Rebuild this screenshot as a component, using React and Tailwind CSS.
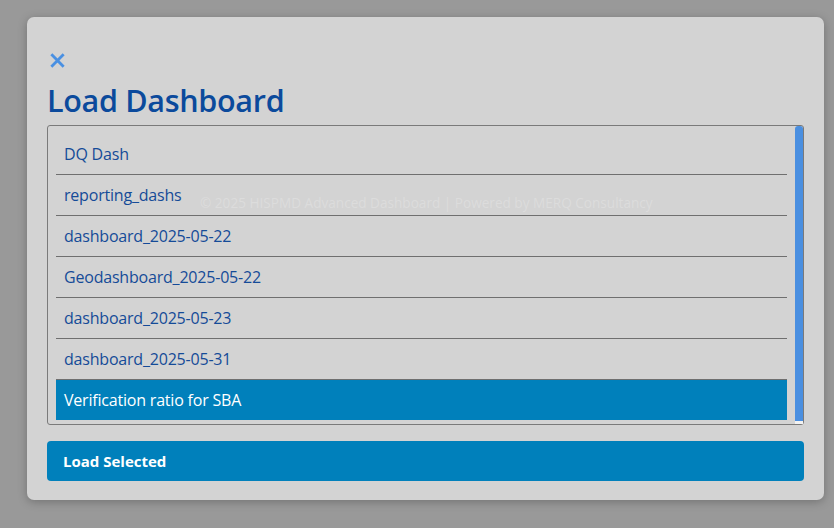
import React, { useState } from 'react';

const dashboards = [
  'DQ Dash',
  'reporting_dashs',
  'dashboard_2025-05-22',
  'Geodashboard_2025-05-22',
  'dashboard_2025-05-23',
  'dashboard_2025-05-31',
  'Verification ratio for SBA',
];

export default function App() {
  const [selected, setSelected] = useState('Verification ratio for SBA');

  return (
    <div className="h-[528px] w-[834px] overflow-hidden bg-[#999999] pt-[17px] pl-[27px] font-['Open_Sans','Noto_Sans',sans-serif]">
      {/* 對話框 */}
      <div className="relative w-[797px] rounded-[7px] bg-[#d3d3d3] px-5 pt-[33px] pb-[19px] shadow-[0_2px_10px_rgba(0,0,0,0.25)]">
        <button className="flex h-5 w-5 items-center justify-center text-[#4a90e2]">
          <svg width="15" height="15" viewBox="0 0 16 16" fill="none" stroke="currentColor" strokeWidth="3" strokeLinecap="square">
            <path d="M2.5 2.5l11 11M13.5 2.5l-11 11" />
          </svg>
        </button>
        <h2 className="mt-[11px] text-[30.5px] leading-[38px] font-semibold tracking-[-0.3px] text-[#0b4a9c]">Load Dashboard</h2>

        {/* 清單 */}
        <div className="mt-[6px] flex h-[300px] rounded-[3px] border border-[#7a7a7a]">
          <ul className="flex-1 pt-2 pl-2 pr-2">
            {dashboards.map((name) => {
              const active = name === selected;
              return (
                <li
                  key={name}
                  onClick={() => setSelected(name)}
                  className={`flex cursor-pointer items-center px-2 text-[16px] tracking-[-0.2px] ${active
                    ? 'h-[40px] bg-[#0080bb] text-white'
                    : 'h-[41px] border-b border-[#6f6f6f] text-[#154b98]'}`}
                >
                  {name}
                </li>
              );
            })}
          </ul>
          <div className="flex w-2 flex-col">
            <div className="flex-1 rounded-t-[3px] bg-[#4a8fe0]"></div>
            <div className="h-[3px] bg-[#f2f2f2]"></div>
          </div>
        </div>

        <button className="mt-4 flex h-10 w-full items-center rounded-[4px] bg-[#0080bb] px-4 text-[15px] font-bold text-white">
          Load Selected
        </button>

        {/* 頁尾浮水印 */}
        <div className="pointer-events-none absolute top-[176px] left-[173px] text-[13.6px] text-[#dcdcdc]">
          © 2025 HISPMD Advanced Dashboard | Powered by MERQ Consultancy
        </div>
      </div>
    </div>
  );
}
